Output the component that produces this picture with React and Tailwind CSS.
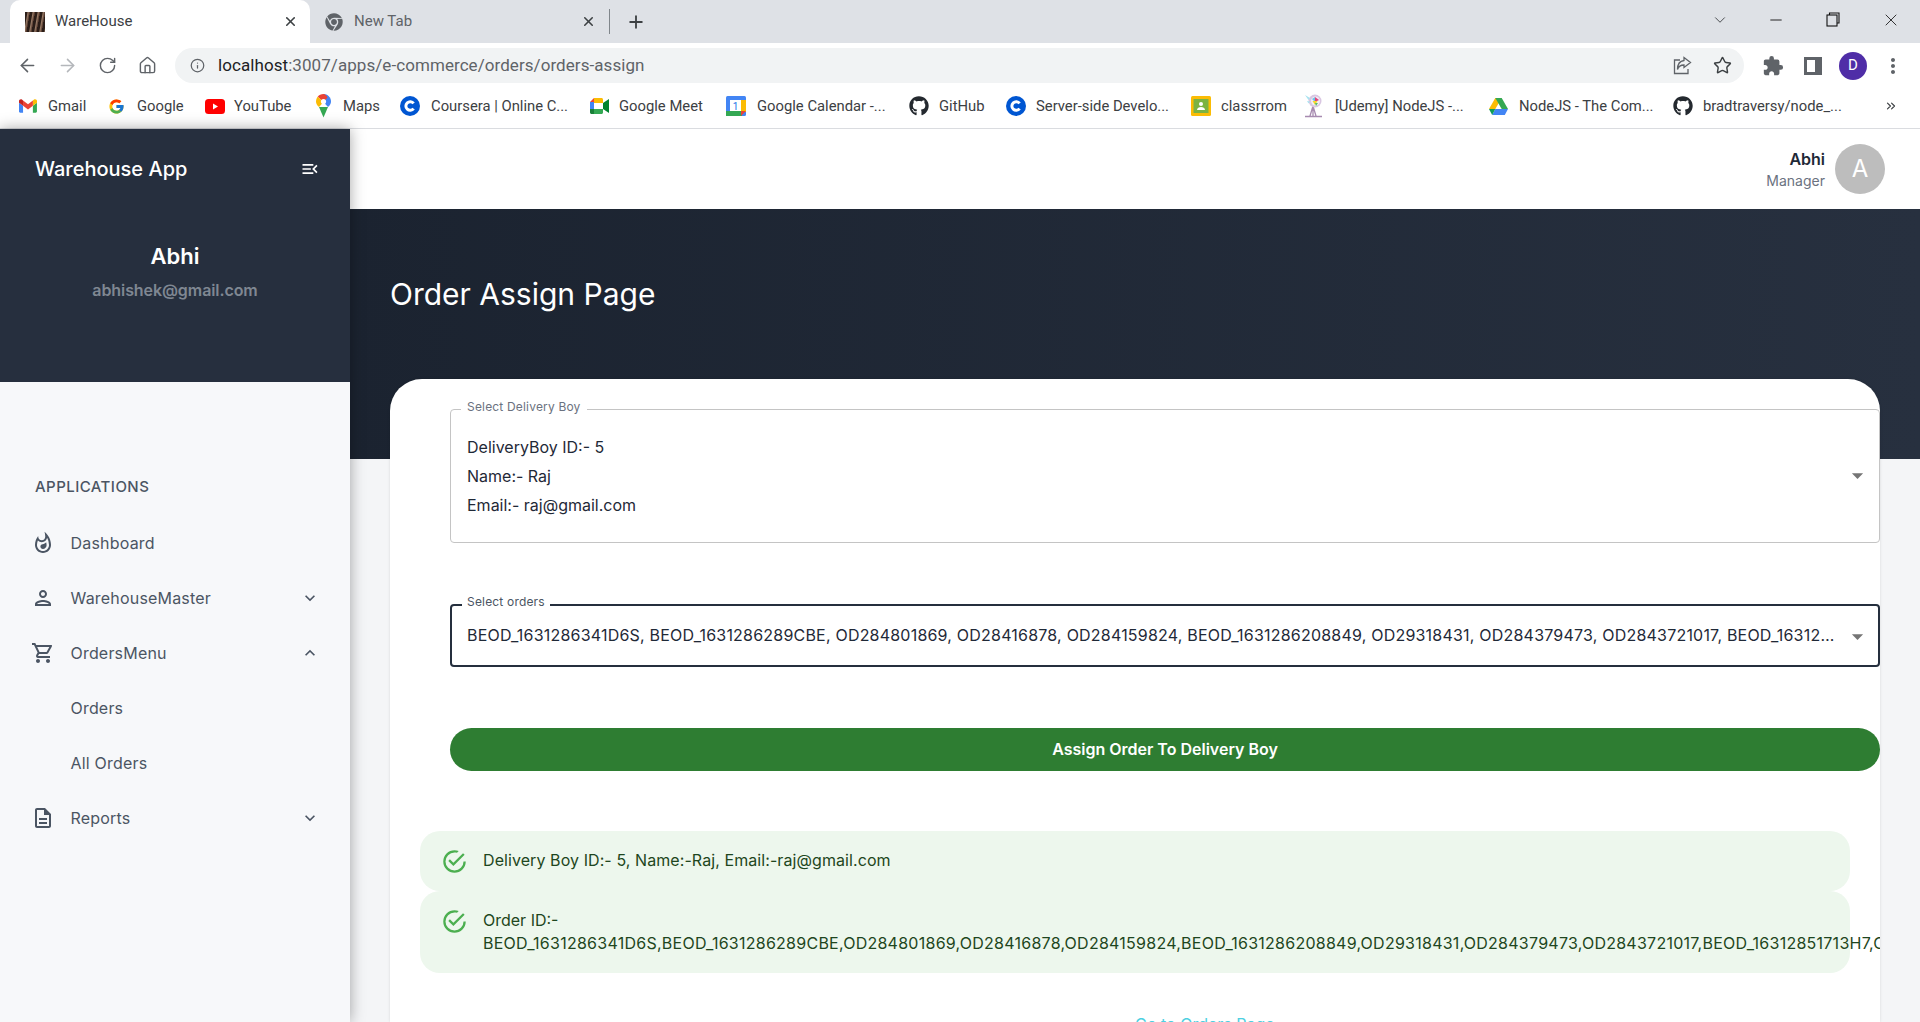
import React from "react";
import { ArrowLeft, ArrowRight, RotateCw, Home, Info, Star, ChevronDown, Minus, X, Plus, ChevronsRight } from "lucide-react";
import {
  MdOutlineWhatshot,
  MdOutlinePerson,
  MdOutlineShoppingCart,
  MdOutlineDescription,
  MdExpandMore,
  MdExpandLess,
  MdOutlineMenuOpen,
  MdArrowDropDown,
  MdExtension,
  MdMoreVert,
} from "react-icons/md";
import { FaGithub, FaChrome } from "react-icons/fa";
import { FcGoogle } from "react-icons/fc";

const inter = "font-['Inter',sans-serif]";

const GmailIcon = () => (
  <svg width="18" height="14" viewBox="0 0 24 18">
    <path fill="#4285F4" d="M1.6 18h3.8V8.7L0 4.6v11.8C0 17.3.7 18 1.6 18z" />
    <path fill="#34A853" d="M18.5 18h3.8c.9 0 1.6-.7 1.6-1.6V4.6l-5.4 4.1z" />
    <path fill="#FBBC04" d="M18.5 1.6v7.1L24 4.6V2.4c0-2-2.3-3.2-3.9-2z" />
    <path fill="#EA4335" d="M5.4 8.7V1.6L12 6.5l6.5-5v7.1L12 13.5z" />
    <path fill="#C5221F" d="M0 2.4v2.2l5.4 4.1V1.6L3.9.4C2.3-.8 0 .4 0 2.4z" />
  </svg>
);

const YoutubeIcon = () => (
  <svg width="20" height="15" viewBox="0 0 20 15">
    <rect width="20" height="15" rx="3.5" fill="#f00" />
    <path d="M8 4.5v6l5-3z" fill="#fff" />
  </svg>
);

const MapsIcon = () => (
  <svg width="15" height="24" viewBox="0 0 15 24">
    <path fill="#34A853" d="M3 13l4.5 10.5L12 13z" />
    <path fill="#4285F4" d="M7.5 0C11.6 0 15 3.3 15 7.4c0 2-.9 3.7-3 5.6L7.5 8z" />
    <path fill="#EA4335" d="M7.5 0C5 0 3 1 1.7 2.7L7.5 8l4-4.5C10.500 1.500 9 0 7.500 0z" />
    <path fill="#FBBC04" d="M1.700 2.700C.6 4 0 5.600 0 7.400c0 2 .9 3.700 3 5.600L7.500 8z" />
    <circle cx="7.500" cy="7.500" r="2.600" fill="#fff" />
  </svg>
);

const CourseraIcon = () => (
  <svg width="20" height="20" viewBox="0 0 20 20">
    <circle cx="10" cy="10" r="10" fill="#0056d2" />
    <path d="M13.600 7.400a4.300 4.300 0 1 0 0 5.200" fill="none" stroke="#fff" strokeWidth="3" />
  </svg>
);

const MeetIcon = () => (
  <svg width="19" height="16" viewBox="0 0 19 16">
    <path fill="#EA4335" d="M4 0v4H0z" />
    <path fill="#4285F4" d="M0 4h4v7H0z" />
    <path fill="#188038" d="M0 11h4v5H1.500C.7 16 0 15.300 0 14.500z" />
    <path fill="#FBBC04" d="M4 0h7.500C12.300 0 13 .7 13 1.500V5H4z" />
    <path fill="#34A853" d="M4 11h9v3.500c0 .8-.7 1.500-1.500 1.500H4z" />
    <path fill="#00832D" d="M13 5l6-4v14l-6-4z" />
    <path fill="#fff" d="M4 5h6v6H4z" />
  </svg>
);

const CalendarIcon = () => (
  <svg width="20" height="20" viewBox="0 0 20 20">
    <rect width="20" height="20" rx="1.500" fill="#4285F4" />
    <rect x="15" y="4" width="5" height="12" fill="#FBBC04" />
    <rect y="15" width="16" height="5" fill="#34A853" />
    <path d="M15 15h5l-5 5z" fill="#EA4335" />
    <rect x="4" y="4" width="11" height="11" fill="#fff" />
    <text x="9.500" y="13.500" fontSize="10" textAnchor="middle" fill="#1a73e8" fontFamily="Roboto, sans-serif">1</text>
  </svg>
);

const ClassroomIcon = () => (
  <svg width="20" height="20" viewBox="0 0 20 20">
    <rect width="20" height="20" rx="1.500" fill="#FBBC04" />
    <rect x="2.500" y="3" width="15" height="14" fill="#7cb342" />
    <circle cx="10" cy="8" r="2" fill="#fff" />
    <path d="M6 14c0-2 2-3 4-3s4 1 4 3z" fill="#fff" />
  </svg>
);

const UdemyIcon = () => (
  <svg width="20" height="24" viewBox="0 0 20 24">
    <path d="M0 22.500h17M8 12v10M5 22l3-10 3 10" stroke="#a78bb0" strokeWidth="1.300" fill="none" />
    <circle cx="10" cy="7" r="6.500" fill="#d9c7e2" />
    <circle cx="10.500" cy="7" r="4.500" fill="#f4edf7" />
    <path d="M10 3l4 3-4 2z" fill="#e0457b" />
    <path d="M7 5l3-2v5z" fill="#6cc6e8" />
    <path d="M7.500 7h5l-2.500 4z" fill="#f6d92c" />
    <path d="M10 9h3l-2 3z" fill="#5bbf6a" />
    <path d="M0 1l5 3-1.500 2zM2 7l3 .5-1.500 2z" fill="#a7e3f0" />
  </svg>
);

const DriveIcon = () => (
  <svg width="19" height="17" viewBox="0 0 19 17">
    <path fill="#FBBC04" d="M6.300 0h6.400l-6.400 11H0z" />
    <path fill="#34A853" d="M12.700 0L19 11h-6.300L6.300 0z" />
    <path fill="#4285F4" d="M19 11l-3.200 6H3.200l3.100-6z" />
    <path fill="#0F9D58" d="M0 11h6.300l-3.100 6z" />
  </svg>
);

const ShareIcon = () => (
  <svg width="19" height="19" viewBox="0 0 19 19" fill="none" stroke="#5f6368" strokeWidth="1.300">
    <path d="M7 4H1.500v13.500H15V13" />
    <path d="M11 1.500l6.500 5-6.500 5V9C7.500 9 5.500 10.500 4.500 13.500 4.500 8.500 7 5 11 4.500z" />
  </svg>
);

const bookmarks = [
  { label: "Gmail", icon: <GmailIcon />, w: "w-[89px]", gap: "gap-[11px]" },
  { label: "Google", icon: <FcGoogle size={17} />, w: "w-[97px]", gap: "gap-[12px]" },
  { label: "YouTube", icon: <YoutubeIcon />, w: "w-[111px]", gap: "gap-[9px]" },
  { label: "Maps", icon: <MapsIcon />, w: "w-[84px]", gap: "gap-[12px]" },
  { label: "Coursera | Online C...", icon: <CourseraIcon />, w: "w-[190px]", gap: "gap-[11px]" },
  { label: "Google Meet", icon: <MeetIcon />, w: "w-[136px]", gap: "gap-[10px]" },
  { label: "Google Calendar -...", icon: <CalendarIcon />, w: "w-[183px]", gap: "gap-[11px]" },
  { label: "GitHub", icon: <FaGithub size={20} color="#24292f" />, w: "w-[97px]", gap: "gap-[10px]" },
  { label: "Server-side Develo...", icon: <CourseraIcon />, w: "w-[185px]", gap: "gap-[10px]" },
  { label: "classrrom", icon: <ClassroomIcon />, w: "w-[114px]", gap: "gap-[10px]" },
  { label: "[Udemy] NodeJS -...", icon: <UdemyIcon />, w: "w-[184px]", gap: "gap-[10px]" },
  { label: "NodeJS - The Com...", icon: <DriveIcon />, w: "w-[184px]", gap: "gap-[11px]" },
  { label: "bradtraversy/node_...", icon: <FaGithub size={20} color="#24292f" />, w: "w-[190px]", gap: "gap-[10px]" },
];

const BrowserChrome = () => (
  <div className="font-['Roboto',sans-serif] text-[#3c4043]">
    <div className="h-[43px] bg-[#dee1e6] flex items-end pl-[10px]">
      <div className="w-[300px] h-[43px] bg-white rounded-t-[10px] flex items-center pl-[15px] pr-[12px]">
        <div className="w-[20px] h-[20px] bg-[repeating-linear-gradient(100deg,#2a1d18_0px,#2a1d18_2px,#9a7d68_3px,#4a3026_5px)]"></div>
        <span className="ml-[10px] text-[15px]">WareHouse</span>
        <X size={15} strokeWidth={2.500} className="ml-auto text-[#3c4043]" />
      </div>
      <div className="w-[299px] h-[43px] flex items-center pl-[15px] pr-[12px] border-r border-transparent">
        <FaChrome size={18} color="#5f6368" />
        <span className="ml-[11px] text-[15px] text-[#5f6368]">New Tab</span>
        <X size={15} strokeWidth={2.500} className="ml-auto" />
      </div>
      <div className="w-px h-[25px] bg-[#80868b] mb-[9px]"></div>
      <Plus size={20} strokeWidth={2.200} className="ml-[16px] mb-[11px] text-[#3c4043]" />
      <div className="ml-auto flex items-center h-[43px] pb-[4px]">
        <ChevronDown size={18} strokeWidth={1.200} className="text-[#3c4043]" />
        <Minus size={18} strokeWidth={1.200} className="ml-[38px] text-[#111]" />
        <svg width="14" height="15" viewBox="0 0 14 15" fill="none" stroke="#111" strokeWidth="1.100" className="ml-[41px]">
          <rect x="1" y="3" width="10" height="11" />
          <path d="M3.500 3V1H13v10h-2" />
        </svg>
        <X size={20} strokeWidth={1} className="ml-[41px] mr-[19px] text-[#111]" />
      </div>
    </div>
    <div className="h-[43px] bg-white flex items-start pt-[5px]">
      <div className="w-[175px] flex items-center h-[35px] pl-[17px] text-[#5f6368]">
        <ArrowLeft size={21} strokeWidth={1.800} />
        <ArrowRight size={21} strokeWidth={1.800} className="ml-[19px] text-[#b4b7bb]" />
        <RotateCw size={19} strokeWidth={1.800} className="ml-[20px]" />
        <Home size={19} strokeWidth={1.800} className="ml-[21px]" />
      </div>
      <div className="w-[1569px] h-[35px] bg-[#f1f3f4] rounded-full flex items-center pl-[15px] pr-[12px]">
        <Info size={15} strokeWidth={2} className="text-[#5f6368]" />
        <span className="ml-[13px] text-[17px] text-[#5f6368] tracking-[0.004em]">
          <span className="text-[#202124]">localhost</span>:3007/apps/e-commerce/orders/orders-assign
        </span>
        <div className="ml-auto flex items-center gap-[21px]">
          <ShareIcon />
          <Star size={19} strokeWidth={1.800} className="text-[#3c4043]" />
        </div>
      </div>
      <div className="flex-1 flex items-center h-[35px] pl-[18px] text-[#5f6368]">
        <MdExtension size={22} />
        <div className="ml-[20px] w-[18px] h-[18px] border-[3px] border-r-[7px] border-[#5f6368]"></div>
        <div className="ml-[17px] w-[28px] h-[28px] rounded-full bg-[#4f2da7] text-white text-[15px] flex items-center justify-center">D</div>
        <MdMoreVert size={24} className="ml-[14px]" />
      </div>
    </div>
    <div className="h-[43px] bg-white border-b border-[#dadce0] flex items-center pl-[19px] pb-[2px] text-[14.800px]">
      {bookmarks.map((item) => (
        <div key={item.label} className={`flex items-center shrink-0 ${item.w} ${item.gap}`}>
          {item.icon}
          <span className="whitespace-nowrap">{item.label}</span>
        </div>
      ))}
      <ChevronsRight size={14} className="ml-[21px]" />
    </div>
  </div>
);

const navItems = [
  { label: "Dashboard", icon: <MdOutlineWhatshot size={24} /> },
  { label: "WarehouseMaster", icon: <MdOutlinePerson size={24} />, arrow: "down" },
  { label: "OrdersMenu", icon: <MdOutlineShoppingCart size={24} />, arrow: "up" },
  { label: "Orders" },
  { label: "All Orders" },
  { label: "Reports", icon: <MdOutlineDescription size={24} />, arrow: "down" },
];

const Sidebar = () => (
  <aside className="w-[350px] shrink-0 bg-[#f7f8fa] shadow-[0_0_14px_rgba(0,0,0,0.35)] z-10 flex flex-col">
    <div className="h-[253px] bg-[#262f3e] text-white">
      <div className="flex items-center justify-between pl-[35px] pr-[30px] pt-[25px]">
        <span className="text-[20px] font-medium leading-[30px]">Warehouse App</span>
        <MdOutlineMenuOpen size={20} />
      </div>
      <div className="mt-[57px] text-center text-[22px] font-semibold leading-[30px]">Abhi</div>
      <div className="mt-[9px] text-center text-[16px] font-semibold leading-[20px] tracking-[-0.005em] text-[#7f8792]">abhishek@gmail.com</div>
    </div>
    <div className="pt-[95px] text-[#4b5563]">
      <div className="pl-[35px] text-[15px] font-medium tracking-[0.03em] leading-[20px] mb-[18px]">APPLICATIONS</div>
      {navItems.map((item) => (
        <div key={item.label} className="h-[55px] flex items-center pl-[31px] pr-[30px]">
          <div className="w-[24px] h-[24px]">{item.icon}</div>
          <span className="ml-[15.500px] text-[16px] tracking-[0.012em]">{item.label}</span>
          {item.arrow === "down" && <MdExpandMore size={20} className="ml-auto" />}
          {item.arrow === "up" && <MdExpandLess size={20} className="ml-auto" />}
        </div>
      ))}
    </div>
  </aside>
);

const SuccessIcon = () => (
  <svg width="27" height="27" viewBox="0 0 24 24" fill="#4caf50" className="shrink-0">
    <path d="M20,12A8,8 0 0,1 12,20A8,8 0 0,1 4,12A8,8 0 0,1 12,4C12.76,4 13.5,4.11 14.2,4.31L15.77,2.74C14.61,2.26 13.34,2 12,2A10,10 0 0,0 2,12A10,10 0 0,0 12,22A10,10 0 0,0 22,12M7.91,10.08L6.5,11.5L11,16L21,6L19.59,4.58L11,13.17L7.91,10.08Z" />
  </svg>
);

const orderIds =
  "BEOD_1631286341D6S,BEOD_1631286289CBE,OD284801869,OD28416878,OD284159824,BEOD_1631286208849,OD29318431,OD284379473,OD2843721017,BEOD_16312851713H7,OD284379473,OD2843721017";

const App = () => {
  return (
    <div className={`h-[1022px] overflow-hidden flex flex-col bg-[#f4f5f7] ${inter}`}>
      <BrowserChrome />
      <div className="flex flex-1 min-h-0">
        <Sidebar />
        <main className="flex-1 min-w-0 flex flex-col">
          <div className="h-[80px] shrink-0 bg-white flex items-center justify-end pr-[35px]">
            <div className="text-right mr-[10px] pt-[1px]">
              <div className="text-[16px] font-semibold text-[#1f2937] leading-[22px]">Abhi</div>
              <div className="text-[14px] text-[#6b7280] leading-[22px]">Manager</div>
            </div>
            <div className="w-[50px] h-[50px] rounded-full bg-[#bdbdbd] text-white text-[24px] flex items-center justify-center">A</div>
          </div>
          <div className="h-[250px] shrink-0 bg-linear-to-r from-[#1b2330] to-[#27303f] pl-[40px] pt-[62px]">
            <h1 className="text-[30px] text-white leading-[46px]">Order Assign Page</h1>
          </div>
          <div className="flex-1 -mt-[80px] mx-[40px] bg-white rounded-t-[32px] shadow-[0_0_3px_rgba(0,0,0,0.12)] overflow-hidden pl-[60px] pt-[30px]">
            <div className="relative h-[134px] border border-[#c4c4c4] rounded-[4px] pl-[16px] pt-[23px] text-[16px] leading-[29px] text-[#1f2937]">
              <span className="absolute -top-[11px] left-[10px] px-[6px] bg-white text-[12px] leading-[16px] tracking-[0.015em] text-[#6b7280]">Select Delivery Boy</span>
              <div>DeliveryBoy ID:- 5</div>
              <div>Name:- Raj</div>
              <div>Email:- raj@gmail.com</div>
              <MdArrowDropDown size={27} className="absolute right-[8px] top-[52px] text-[#757575]" />
            </div>
            <div className="relative h-[63px] mt-[61px] border-2 border-[#252f3e] rounded-[4px] pl-[15px] pr-[41px] pb-[2px] flex items-center text-[16px] tracking-[0.013em] text-[#1f2937]">
              <span className="absolute -top-[12px] left-[10px] px-[5px] bg-white text-[12px] leading-[16px] tracking-[0.015em] text-[#4b5563]">Select orders</span>
              <span className="truncate">
                BEOD_1631286341D6S, BEOD_1631286289CBE, OD284801869, OD28416878, OD284159824, BEOD_1631286208849, OD29318431, OD284379473, OD2843721017, BEOD_16312851713H7, OD284379473
              </span>
              <MdArrowDropDown size={27} className="absolute right-[7px] top-[17px] text-[#757575]" />
            </div>
            <div className="h-[43px] mt-[61px] pb-[2px] rounded-full bg-[#2e7d32] text-white text-[16px] font-semibold flex items-center justify-center">
              Assign Order To Delivery Boy
            </div>
            <div className="-ml-[30px] mr-[30px] mt-[60px] text-[16px] text-[#1e4620]">
              <div className="h-[60px] bg-[#edf7ed] rounded-[20px] flex items-start pl-[20.500px] pt-[16.500px]">
                <SuccessIcon />
                <span className="ml-[15.500px] mt-[1px] leading-[23px] tracking-[0.005em]">Delivery Boy ID:- 5, Name:-Raj, Email:-raj@gmail.com</span>
              </div>
              <div className="h-[82px] bg-[#edf7ed] rounded-[20px] flex items-start pl-[20.500px] pt-[16.500px]">
                <SuccessIcon />
                <div className="ml-[15.500px] mt-[1px] leading-[23px] whitespace-nowrap">
                  <div>Order ID:-</div>
                  <div className="tracking-[0.016em]">{orderIds}</div>
                </div>
              </div>
            </div>
            <div className="mt-[39px] ml-[685px] text-[16px] text-[#4dd0e1]">Go to Orders Page</div>
          </div>
        </main>
      </div>
    </div>
  );
};

export default App;
